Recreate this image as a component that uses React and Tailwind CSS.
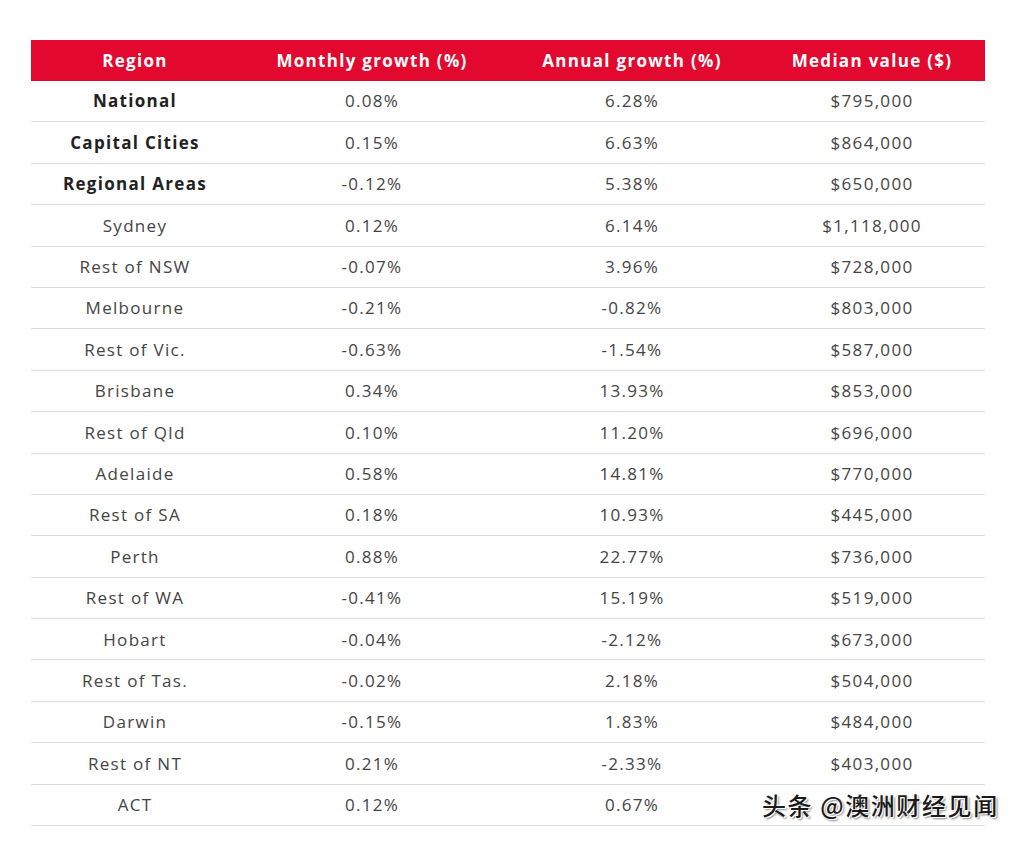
import React from 'react';

const rows = [
    { region: 'National', monthly: '0.08%', annual: '6.28%', median: '$795,000', bold: true },
    { region: 'Capital Cities', monthly: '0.15%', annual: '6.63%', median: '$864,000', bold: true },
    { region: 'Regional Areas', monthly: '-0.12%', annual: '5.38%', median: '$650,000', bold: true },
    { region: 'Sydney', monthly: '0.12%', annual: '6.14%', median: '$1,118,000' },
    { region: 'Rest of NSW', monthly: '-0.07%', annual: '3.96%', median: '$728,000' },
    { region: 'Melbourne', monthly: '-0.21%', annual: '-0.82%', median: '$803,000' },
    { region: 'Rest of Vic.', monthly: '-0.63%', annual: '-1.54%', median: '$587,000' },
    { region: 'Brisbane', monthly: '0.34%', annual: '13.93%', median: '$853,000' },
    { region: 'Rest of Qld', monthly: '0.10%', annual: '11.20%', median: '$696,000' },
    { region: 'Adelaide', monthly: '0.58%', annual: '14.81%', median: '$770,000' },
    { region: 'Rest of SA', monthly: '0.18%', annual: '10.93%', median: '$445,000' },
    { region: 'Perth', monthly: '0.88%', annual: '22.77%', median: '$736,000' },
    { region: 'Rest of WA', monthly: '-0.41%', annual: '15.19%', median: '$519,000' },
    { region: 'Hobart', monthly: '-0.04%', annual: '-2.12%', median: '$673,000' },
    { region: 'Rest of Tas.', monthly: '-0.02%', annual: '2.18%', median: '$504,000' },
    { region: 'Darwin', monthly: '-0.15%', annual: '1.83%', median: '$484,000' },
    { region: 'Rest of NT', monthly: '0.21%', annual: '-2.33%', median: '$403,000' },
    { region: 'ACT', monthly: '0.12%', annual: '0.67%', median: '' },
];

const cols = 'grid grid-cols-[208px_266px_254px_226px]';

const App = () => {
    return (
        <div className="w-[1024px] h-[841px] bg-white pt-10 px-[31px] font-['Open_Sans',sans-serif] relative">
            <div className="w-[954px]">
                <div className={`${cols} h-[41px] bg-[#e3082d] text-white font-bold text-[17px] tracking-[1.3px] items-center text-center`}>
                    <div>Region</div>
                    <div>Monthly growth (%)</div>
                    <div>Annual growth (%)</div>
                    <div>Median value ($)</div>
                </div>
                {rows.map((r) => (
                    <div key={r.region} className={`${cols} h-[41.4px] border-b border-[#dcdcdc] items-center text-center text-[17px] tracking-[1.3px] text-[#444]`}>
                        <div className={r.bold ? 'font-bold text-[#222]' : ''}>{r.region}</div>
                        <div>{r.monthly}</div>
                        <div>{r.annual}</div>
                        <div>{r.median}</div>
                    </div>
                ))}
            </div>
            {/* watermark over the last row */}
            <div className="absolute left-[762px] top-[787px] text-[24px] font-medium text-[#1a1a1a] font-['Noto_Sans_CJK_SC',sans-serif] [text-shadow:1px_1px_0_#fff,-1px_-1px_0_#fff,2px_2px_2px_#888] tracking-[1.6px]">
                头条 @澳洲财经见闻
            </div>
        </div>
    );
};

export default App;
